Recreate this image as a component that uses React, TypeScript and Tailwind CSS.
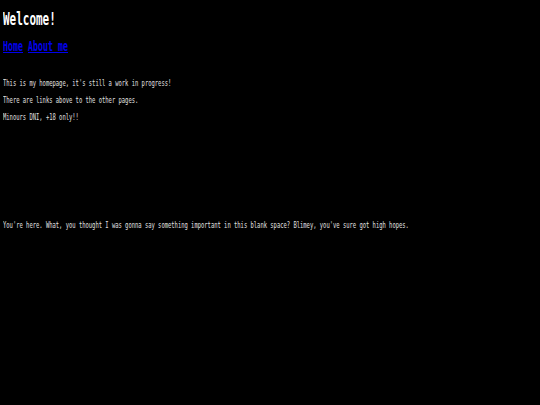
export default function App() {
  const sh = "inline-block origin-left scale-x-[0.609] whitespace-nowrap";
  const sl = "inline-block origin-left scale-x-[0.615] whitespace-nowrap";
  const sb = "inline-block origin-left scale-x-[0.609] whitespace-nowrap";
  return (
    <div className="min-h-[405px] w-full bg-black text-[#e0e0e0] font-['DejaVu_Sans_Mono',monospace] pl-[3px] overflow-hidden">
      <div className="pt-[9px] h-[20px] box-content leading-[20px] text-[18px] font-bold text-white">
        <span className={sh}>Welcome!</span>
      </div>
      <div className="mt-[10px] h-[15px] leading-[15px] text-[13.5px] font-bold">
        <span className={sl}>
          <a href="#" className="text-[#0000ee] underline">Home</a>{" "}
          <a href="#" className="text-[#0000ee] underline">About me</a>
        </span>
      </div>
      <div className="mt-[24px] flex flex-col gap-[7px] text-[9px] leading-[10px]">
        <div className="h-[10px]"><span className={sb}>This is my homepage, it's still a work in progress!</span></div>
        <div className="h-[10px]"><span className={sb}>There are links above to the other pages.</span></div>
        <div className="h-[10px]"><span className={sb}>Minours DNI, +18 only!!</span></div>
      </div>
      <div className="mt-[98px] h-[10px] text-[9px] leading-[10px]">
        <span className={sb}>You're here. What, you thought I was gonna say something important in this blank space? Blimey, you've sure got high hopes.</span>
      </div>
    </div>
  );
}
